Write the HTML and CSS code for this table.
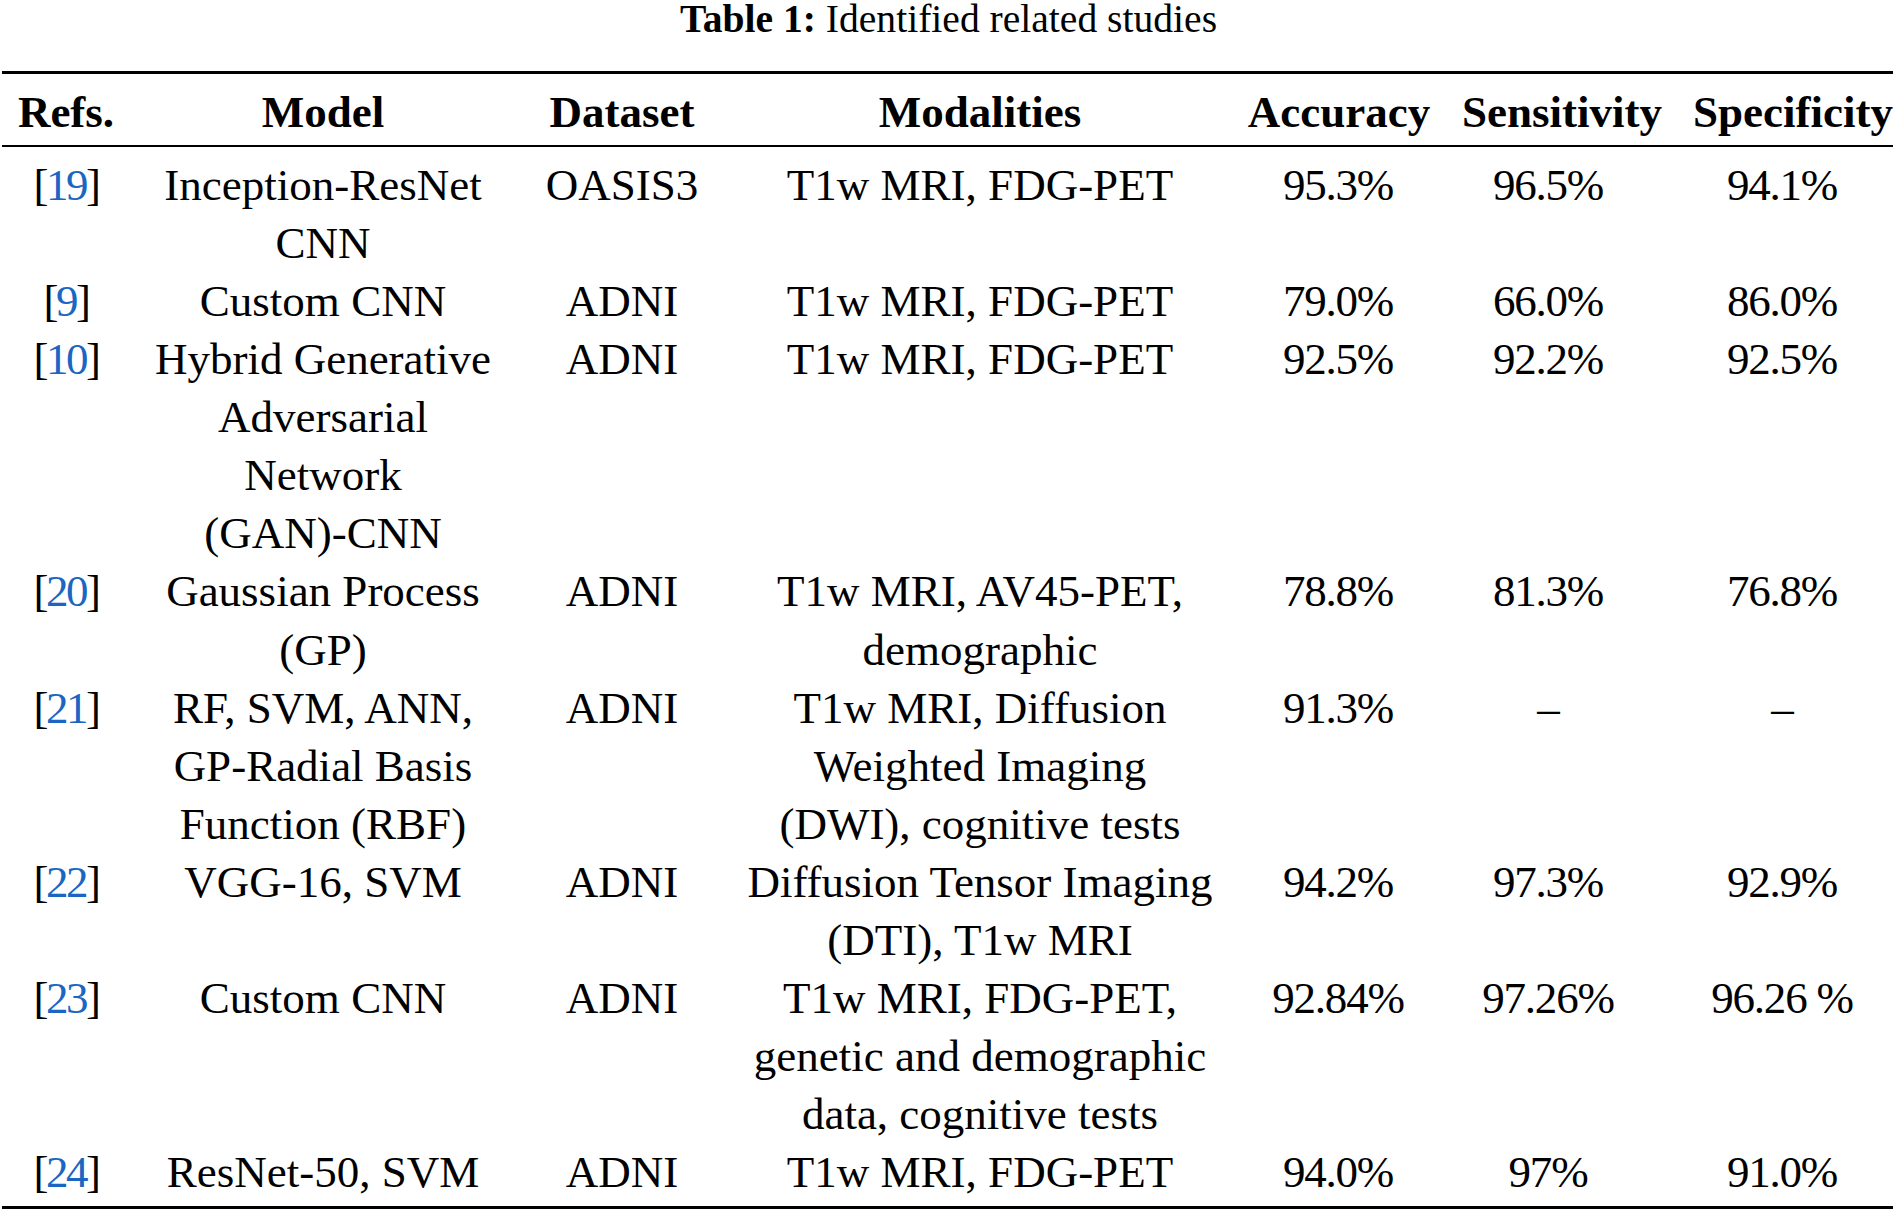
FILE: index.html
```html
<!DOCTYPE html>
<html lang="en">
<head>
<meta charset="utf-8">
<title>Table 1: Identified related studies</title>
<link rel="stylesheet" href="styles.css">
</head>
<body>
<div class="page">
  <div class="caption"><span class="caption-label">Table 1:</span> Identified related studies</div>
  <table class="studies">
    <colgroup>
      <col class="c-ref">
      <col class="c-model">
      <col class="c-data">
      <col class="c-mod">
      <col class="c-acc">
      <col class="c-sens">
      <col class="c-spec">
    </colgroup>
    <thead>
      <tr>
        <th>Refs.</th>
        <th>Model</th>
        <th>Dataset</th>
        <th>Modalities</th>
        <th>Accuracy</th>
        <th class="h-sens">Sensitivity</th>
        <th class="h-spec">Specificity</th>
      </tr>
    </thead>
    <tbody>
      <tr>
        <td class="v-ref">[<a class="ref">19</a>]</td>
        <td>Inception-ResNet<br>CNN</td>
        <td>OASIS3</td>
        <td>T1w MRI, FDG-PET</td>
        <td class="v-acc">95.3%</td>
        <td class="v-sens">96.5%</td>
        <td class="v-spec">94.1%</td>
      </tr>
      <tr>
        <td class="v-ref">[<a class="ref">9</a>]</td>
        <td>Custom CNN</td>
        <td>ADNI</td>
        <td>T1w MRI, FDG-PET</td>
        <td class="v-acc">79.0%</td>
        <td class="v-sens">66.0%</td>
        <td class="v-spec">86.0%</td>
      </tr>
      <tr>
        <td class="v-ref">[<a class="ref">10</a>]</td>
        <td>Hybrid Generative<br>Adversarial<br>Network<br>(GAN)-CNN</td>
        <td>ADNI</td>
        <td>T1w MRI, FDG-PET</td>
        <td class="v-acc">92.5%</td>
        <td class="v-sens">92.2%</td>
        <td class="v-spec">92.5%</td>
      </tr>
      <tr>
        <td class="v-ref">[<a class="ref">20</a>]</td>
        <td>Gaussian Process<br>(GP)</td>
        <td>ADNI</td>
        <td>T1w MRI, AV45-PET,<br>demographic</td>
        <td class="v-acc">78.8%</td>
        <td class="v-sens">81.3%</td>
        <td class="v-spec">76.8%</td>
      </tr>
      <tr>
        <td class="v-ref">[<a class="ref">21</a>]</td>
        <td>RF, SVM, ANN,<br>GP-Radial Basis<br>Function (RBF)</td>
        <td>ADNI</td>
        <td>T1w MRI, Diffusion<br>Weighted Imaging<br>(DWI), cognitive tests</td>
        <td class="v-acc">91.3%</td>
        <td class="v-sens">–</td>
        <td class="v-spec">–</td>
      </tr>
      <tr>
        <td class="v-ref">[<a class="ref">22</a>]</td>
        <td>VGG-16, SVM</td>
        <td>ADNI</td>
        <td>Diffusion Tensor Imaging<br>(DTI), T1w MRI</td>
        <td class="v-acc">94.2%</td>
        <td class="v-sens">97.3%</td>
        <td class="v-spec">92.9%</td>
      </tr>
      <tr>
        <td class="v-ref">[<a class="ref">23</a>]</td>
        <td>Custom CNN</td>
        <td>ADNI</td>
        <td>T1w MRI, FDG-PET,<br>genetic and demographic<br>data, cognitive tests</td>
        <td class="v-acc">92.84%</td>
        <td class="v-sens">97.26%</td>
        <td class="v-spec">96.26 %</td>
      </tr>
      <tr>
        <td class="v-ref">[<a class="ref">24</a>]</td>
        <td>ResNet-50, SVM</td>
        <td>ADNI</td>
        <td>T1w MRI, FDG-PET</td>
        <td class="v-acc">94.0%</td>
        <td class="v-sens">97%</td>
        <td class="v-spec">91.0%</td>
      </tr>
    </tbody>
  </table>
</div>
</body>
</html>
```

FILE: styles.css
```css
html, body {
  margin: 0;
  padding: 0;
  background: #ffffff;
}

.page {
  width: 1897px;
  font-family: "Liberation Serif", "Times New Roman", serif;
  color: #000000;
}

.caption {
  font-size: 39.6px;
  line-height: 38px;
  text-align: center;
  margin-bottom: 33px;
  white-space: nowrap;
}

.caption-label {
  font-weight: bold;
}

.studies {
  margin-left: 2px;
  width: 1891px;
  table-layout: fixed;
  border-collapse: collapse;
  border-top: 3px solid #000;
  border-bottom: 3px solid #000;
  font-size: 45px;
}

.c-ref { width: 128px; }
.c-model { width: 386px; }
.c-data { width: 212px; }
.c-mod { width: 504px; }
.c-acc { width: 214px; }
.c-sens { width: 218px; }
.c-spec { width: 229px; }

.studies th {
  font-weight: bold;
  line-height: 58px;
  padding: 9px 0 4px 0;
  text-align: center;
  white-space: nowrap;
  border-bottom: 2px solid #000;
}

.studies th.h-sens {
  text-align: right;
  padding-right: 2px;
}

.studies th.h-spec {
  text-align: right;
  padding-right: 0;
}

.studies td {
  line-height: 58.07px;
  padding: 0;
  text-align: center;
  vertical-align: top;
  white-space: nowrap;
}

.studies tbody tr:first-child td {
  padding-top: 9px;
}

.studies tbody tr:last-child td {
  padding-bottom: 5px;
}

.studies td.v-ref {
  letter-spacing: -2.5px;
}

.studies td.v-acc {
  padding-right: 2px;
  letter-spacing: -1.2px;
}

.studies td.v-sens {
  padding-right: 14px;
  letter-spacing: -1.2px;
}

.studies td.v-spec {
  padding-left: 7px;
  letter-spacing: -1.2px;
}

.ref {
  color: #1a66c2;
  text-decoration: none;
}
```
